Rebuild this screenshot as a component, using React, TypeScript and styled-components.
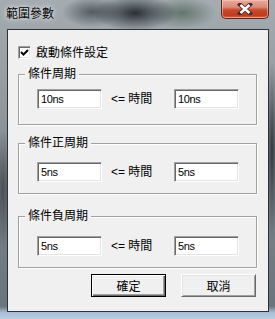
import * as React from 'react';
import styled, { createGlobalStyle } from 'styled-components';

const GlobalStyle = createGlobalStyle`
    html, body {
        margin: 0;
        padding: 0;
        background: #6f7880;
    }
    body {
        font-family: 'Liberation Sans', 'Noto Sans CJK TC', sans-serif;
        font-size: 12px;
        color: #000;
    }
`;

const UI_FONT = `'Liberation Sans', 'Noto Sans CJK TC', sans-serif`;

const Window: any = styled.div`
    box-sizing: border-box;
    width: 275px;
    height: 319px;
    display: flex;
    flex-direction: column;
    padding: 0 6px 7px 7px;
    overflow: hidden;
    background:
        radial-gradient(ellipse 42px 18px at 135px 13px, rgba(34, 40, 46, 0.95), transparent),
        radial-gradient(ellipse 30px 15px at 92px 12px, rgba(70, 78, 84, 0.85), transparent),
        radial-gradient(ellipse 34px 16px at 182px 13px, rgba(84, 104, 92, 0.8), transparent),
        radial-gradient(ellipse 10px 60px at 3px 190px, rgba(60, 66, 72, 0.8), transparent),
        radial-gradient(ellipse 6px 90px at 272px 150px, rgba(40, 46, 52, 0.9), transparent),
        linear-gradient(to bottom, #a4acb1 0, #939ba1 30%, #7b848b 60%, #6a747c 96%, #a8bfd5 98%, #b9cde0 100%);
`;

const TitleBar: any = styled.div`
    height: 29px;
    flex: none;
    display: flex;
    align-items: flex-start;
    justify-content: space-between;
    margin: 0 -6px 0 -7px;
    padding: 0 6px 0 6px;
`;

const Title: any = styled.div`
    font-family: ${UI_FONT};
    font-size: 12px;
    line-height: 14px;
    margin-top: 7px;
    color: #000;
    text-shadow: 0 0 4px rgba(255, 255, 255, 0.8), 0 0 8px rgba(255, 255, 255, 0.5);
`;

const CloseButton: any = styled.div`
    box-sizing: border-box;
    width: 48px;
    height: 19px;
    display: flex;
    align-items: center;
    justify-content: center;
    border: 1px solid #5b2b22;
    border-top: none;
    border-radius: 0 0 5px 5px;
    background: linear-gradient(to bottom, #e9aa9b 0, #d98a77 40%, #c8492e 55%, #c13a1d 85%, #d7694f 100%);
    box-shadow: inset 0 0 0 1px rgba(255, 210, 200, 0.5);
`;

const Client: any = styled.div`
    flex: 1;
    display: flex;
    flex-direction: column;
    background: #f0f0f0;
    border: 1px solid #2c3237;
    padding: 0 11px 0 10px;
`;

const CheckRow: any = styled.label`
    display: flex;
    align-items: center;
    gap: 5px;
    height: 13px;
    margin-top: 16px;
    font-family: ${UI_FONT};
    font-size: 12px;
    line-height: 14px;
`;

const CheckBox: any = styled.span`
    box-sizing: border-box;
    width: 13px;
    height: 13px;
    display: flex;
    align-items: center;
    justify-content: center;
    background: #fff;
    border: 1px solid;
    border-color: #a0a0a0 #fff #fff #a0a0a0;
    box-shadow: inset 1px 1px 0 #696969, inset -1px -1px 0 #e3e3e3;
`;

const GroupBox: any = styled.div`
    position: relative;
    box-sizing: border-box;
    height: ${(p: any) => p.$height}px;
    margin-top: ${(p: any) => p.$top}px;
    border: 1px solid #a0a0a0;
    box-shadow: inset 1px 1px 0 #fff, 1px 1px 0 #fff;
`;

const Legend: any = styled.span`
    position: absolute;
    top: -8px;
    left: 6px;
    padding: 0 3px;
    background: #f0f0f0;
    font-family: ${UI_FONT};
    font-size: 12px;
    line-height: 14px;
`;

const FieldRow: any = styled.div`
    display: grid;
    grid-template-columns: 65px 72px 65px;
    align-items: center;
    padding-left: 18px;
    margin-top: ${(p: any) => p.$top}px;
`;

const TextBox: any = styled.div`
    box-sizing: border-box;
    height: 20px;
    display: flex;
    align-items: center;
    padding-left: 3px;
    background: #fff;
    border: 1px solid;
    border-color: #a0a0a0 #fff #fff #a0a0a0;
    box-shadow: inset 1px 1px 0 #696969, inset -1px -1px 0 #e3e3e3;
    font-family: ${UI_FONT};
    font-size: 11px;
    letter-spacing: -0.4px;
`;

const Relation: any = styled.span`
    padding-left: 9px;
    font-family: ${UI_FONT};
    font-size: 12px;
    line-height: 14px;
    white-space: pre;
`;

const ButtonRow: any = styled.div`
    display: flex;
    justify-content: flex-end;
    gap: 15px;
    margin-top: 6px;
    padding-right: 1px;
`;

const Button: any = styled.div`
    box-sizing: border-box;
    width: 75px;
    height: 23px;
    display: flex;
    align-items: center;
    justify-content: center;
    background: #f0f0f0;
    font-family: ${UI_FONT};
    font-size: 12px;
    border: 1px solid ${(p: any) => (p.$default ? '#000' : '#fff')};
    ${(p: any) => p.$default
        ? 'box-shadow: inset 1px 1px 0 #fff, inset -1px -1px 0 #696969, inset -2px -2px 0 #a0a0a0;'
        : 'border-color: #fff #696969 #696969 #fff; box-shadow: inset 1px 1px 0 #e3e3e3, inset -1px -1px 0 #a0a0a0;'}
`;

interface IGroup {
    title: string;
    low: string;
    high: string;
    top: number;
    height: number;
    rowTop: number;
}

const groups: IGroup[] = [
    { title: '條件周期', low: '10ns', high: '10ns', top: 15, height: 51, rowTop: 14 },
    { title: '條件正周期', low: '5ns', high: '5ns', top: 18, height: 51, rowTop: 18 },
    { title: '條件負周期', low: '5ns', high: '5ns', top: 22, height: 52, rowTop: 19 }
];

export default class App extends React.Component {
    public render() {
        return (
            <>
                <GlobalStyle />
                <Window>
                    <TitleBar>
                        <Title>範圍參數</Title>
                        <CloseButton>
                            <svg width="16" height="12" viewBox="0 0 16 12">
                                <path d="M3 1.5 L13 10.5 M13 1.5 L3 10.5" stroke="#4a2a24" strokeWidth="4.2" strokeLinecap="square" />
                                <path d="M3.5 2 L12.5 10 M12.5 2 L3.5 10" stroke="#fff" strokeWidth="2.4" />
                            </svg>
                        </CloseButton>
                    </TitleBar>
                    <Client>
                        <CheckRow>
                            <CheckBox>
                                <svg width="9" height="9" viewBox="0 0 9 9">
                                    <path d="M1 4 L3.5 6.5 L8 2" stroke="#000" strokeWidth="2" fill="none" />
                                </svg>
                            </CheckBox>
                            啟動條件設定
                        </CheckRow>
                        {groups.map((g) => (
                            <GroupBox key={g.title} $top={g.top} $height={g.height}>
                                <Legend>{g.title}</Legend>
                                <FieldRow $top={g.rowTop}>
                                    <TextBox>{g.low}</TextBox>
                                    <Relation>{'<= 時間'}</Relation>
                                    <TextBox>{g.high}</TextBox>
                                </FieldRow>
                            </GroupBox>
                        ))}
                        <ButtonRow>
                            <Button $default>確定</Button>
                            <Button>取消</Button>
                        </ButtonRow>
                    </Client>
                </Window>
            </>
        );
    }
}
